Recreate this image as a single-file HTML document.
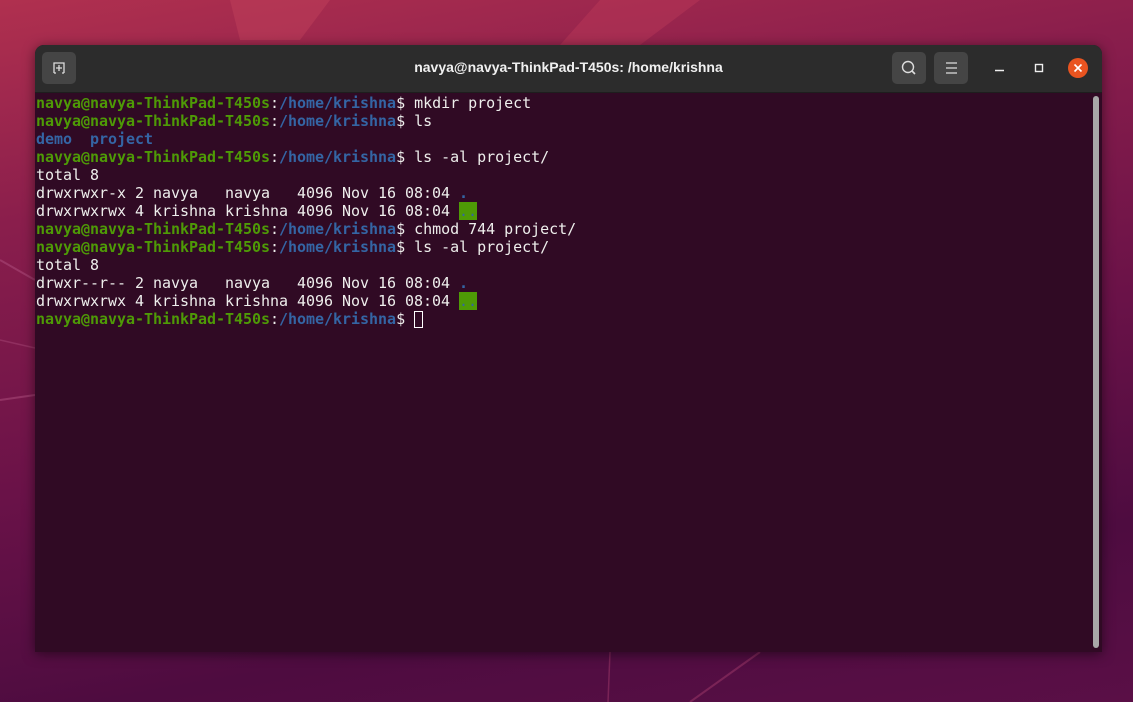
<!DOCTYPE html>
<html><head><style>
html,body{margin:0;padding:0;width:1133px;height:702px;overflow:hidden;}
body{background:linear-gradient(170deg,#b0304f 0%,#8a1e4c 25%,#6a1248 55%,#4e0c40 80%,#5a0f46 100%);position:relative;font-family:"Liberation Sans",sans-serif;}
.bgshape{position:absolute;}
.win{position:absolute;left:35px;top:45px;width:1067px;height:607px;background:#300a24;border-radius:9px 9px 0 0;overflow:hidden;box-shadow:0 2px 12px rgba(0,0,0,.5);}
.tb{position:absolute;left:0;top:0;width:100%;height:47px;background:#2c2c2c;border-bottom:1px solid #1e1e1e;}
.btn{position:absolute;top:7px;width:34px;height:32px;background:#454545;border-radius:5px;}
.title{position:absolute;left:0;right:0;top:14px;text-align:center;color:#f0f0f0;font-weight:bold;font-size:14px;}
.term{position:absolute;left:1px;top:49px;font-family:"DejaVu Sans Mono","Liberation Mono",monospace;font-size:15px;line-height:18px;color:#eeeeec;white-space:pre;letter-spacing:-0.03px;}
.g{color:#4e9a06;font-weight:bold}.b{color:#3465a4;font-weight:bold}
.hl{background:#4e9a06;color:#3465a4}
.cur{display:inline-block;width:9px;height:17px;border:1px solid #fff;box-sizing:border-box;vertical-align:-4px}
.sb{position:absolute;left:1058px;top:51px;width:6px;height:552px;background:#a8a8a8;border-radius:3px;}
</style></head><body>
<svg class="bgshape" width="1133" height="702" style="left:0;top:0">
<polygon points="230,0 330,0 300,40 240,40" fill="#c0405a" opacity=".5"/>
<polygon points="600,0 700,0 640,45 560,45" fill="#c6405c" opacity=".35"/>
<line x1="0" y1="260" x2="35" y2="280" stroke="#b05080" stroke-width="2" opacity=".5"/>
<line x1="0" y1="400" x2="35" y2="395" stroke="#b05080" stroke-width="2" opacity=".5"/>
<line x1="0" y1="340" x2="35" y2="348" stroke="#b05080" stroke-width="1.5" opacity=".4"/>
<line x1="760" y1="652" x2="690" y2="702" stroke="#a03a6a" stroke-width="2" opacity=".5"/>
<line x1="610" y1="652" x2="608" y2="702" stroke="#a03a6a" stroke-width="1.5" opacity=".5"/>
</svg>
<div class="win">
<div class="tb">
<div class="btn" style="left:7px"><svg width="34" height="32"><path d="M12 21 V11 H22 V21 M14 21 H12 M22 21 H20 M17 13 V19 M14 16 H20" stroke="#ddd" stroke-width="1.3" fill="none"/></svg></div>
<div class="title">navya@navya-ThinkPad-T450s: /home/krishna</div>
<div class="btn" style="left:857px"><svg width="34" height="32"><circle cx="16" cy="15" r="5.5" stroke="#ddd" stroke-width="1.4" fill="none"/><line x1="20" y1="19" x2="23" y2="22" stroke="#ddd" stroke-width="1.6"/></svg></div>
<div class="btn" style="left:899px"><svg width="34" height="32"><path d="M12 11H23M12 16H23M12 21H23" stroke="#ddd" stroke-width="1.3"/></svg></div>
<svg style="position:absolute;left:950px;top:11px" width="115" height="30"><line x1="10" y1="14.5" x2="19" y2="14.5" stroke="#eee" stroke-width="1.4"/><rect x="50.5" y="8.5" width="7" height="7" stroke="#eee" stroke-width="1.4" fill="none"/><circle cx="93" cy="12" r="10" fill="#e95420"/><path d="M89.5 8.5L96.5 15.5M96.5 8.5L89.5 15.5" stroke="#fff" stroke-width="1.6"/></svg>
</div>
<div class="term"><span class="g">navya@navya-ThinkPad-T450s</span>:<span class="b">/home/krishna</span>$ mkdir project
<span class="g">navya@navya-ThinkPad-T450s</span>:<span class="b">/home/krishna</span>$ ls
<span class="b">demo</span>  <span class="b">project</span>
<span class="g">navya@navya-ThinkPad-T450s</span>:<span class="b">/home/krishna</span>$ ls -al project/
total 8
drwxrwxr-x 2 navya   navya   4096 Nov 16 08:04 <span class="b">.</span>
drwxrwxrwx 4 krishna krishna 4096 Nov 16 08:04 <span class="hl">..</span>
<span class="g">navya@navya-ThinkPad-T450s</span>:<span class="b">/home/krishna</span>$ chmod 744 project/
<span class="g">navya@navya-ThinkPad-T450s</span>:<span class="b">/home/krishna</span>$ ls -al project/
total 8
drwxr--r-- 2 navya   navya   4096 Nov 16 08:04 <span class="b">.</span>
drwxrwxrwx 4 krishna krishna 4096 Nov 16 08:04 <span class="hl">..</span>
<span class="g">navya@navya-ThinkPad-T450s</span>:<span class="b">/home/krishna</span>$ <span class="cur"></span></div>
<div class="sb"></div>
</div>
</body></html>
